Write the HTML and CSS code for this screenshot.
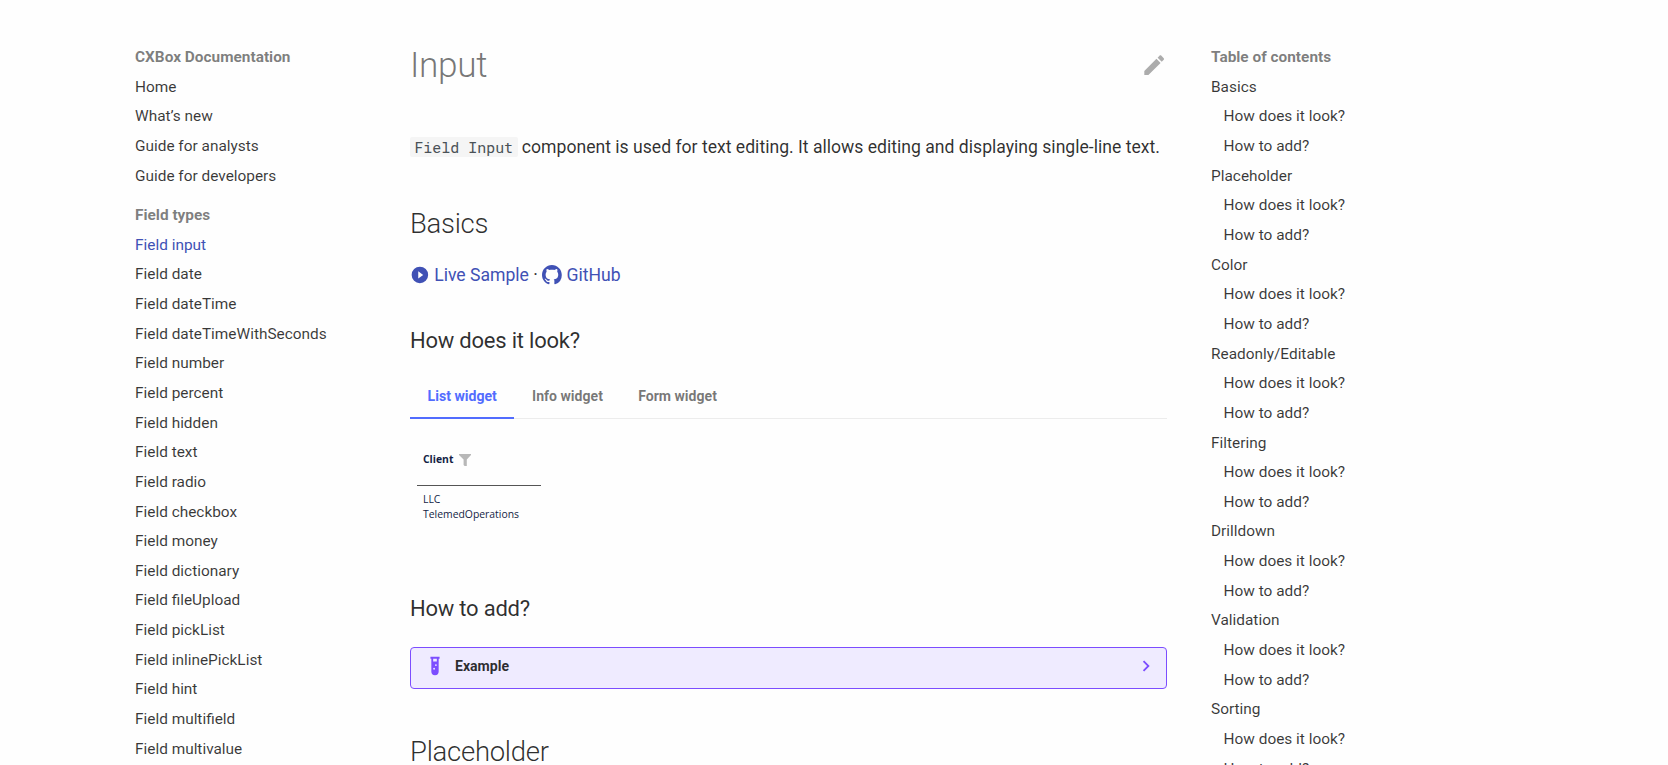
FILE: index.html
```
<!DOCTYPE html>
<html lang="en">
<head>
<meta charset="utf-8">
<title>Input - CXBox Documentation</title>
<link rel="stylesheet" href="styles.css">
</head>
<body>
<div class="layout">
  <nav class="nav">
    <h2 class="nav-title">CXBox Documentation</h2>
    <ul class="nav-list">
      <li>Home</li>
      <li>What’s new</li>
      <li>Guide for analysts</li>
      <li>Guide for developers</li>
    </ul>
    <h2 class="nav-title nav-section">Field types</h2>
    <ul class="nav-list">
      <li class="active">Field input</li>
      <li>Field date</li>
      <li>Field dateTime</li>
      <li>Field dateTimeWithSeconds</li>
      <li>Field number</li>
      <li>Field percent</li>
      <li>Field hidden</li>
      <li>Field text</li>
      <li>Field radio</li>
      <li>Field checkbox</li>
      <li>Field money</li>
      <li>Field dictionary</li>
      <li>Field fileUpload</li>
      <li>Field pickList</li>
      <li>Field inlinePickList</li>
      <li>Field hint</li>
      <li>Field multifield</li>
      <li>Field multivalue</li>
    </ul>
  </nav>

  <main class="content">
    <header class="page-head">
      <h1>Input</h1>
      <svg class="edit" viewBox="0 0 24 24"><path d="M20.71 7.04c.39-.39.39-1.04 0-1.41l-2.34-2.34c-.37-.39-1.02-.39-1.41 0l-1.84 1.83 3.75 3.75M3 17.25V21h3.75L17.81 9.93l-3.75-3.75z"/></svg>
    </header>
    <p class="intro"><code>Field Input</code> component is used for text editing. It allows editing and displaying single-line text.</p>

    <h2>Basics</h2>
    <p class="links"><a><svg class="ico" viewBox="0 0 24 24"><path fill-rule="evenodd" d="M10 16.500l6-4.500-6-4.500zM12 2A10 10 0 0 0 2 12a10 10 0 0 0 10 10 10 10 0 0 0 10-10A10 10 0 0 0 12 2z"/></svg> Live Sample</a> · <a><svg class="ico" viewBox="0 0 16 16"><path d="M8 0C3.580 0 0 3.580 0 8c0 3.540 2.290 6.530 5.470 7.590.4.070.55-.17.55-.38 0-.19-.01-.82-.01-1.490-2.010.37-2.530-.49-2.690-.94-.09-.23-.48-.94-.82-1.130-.28-.15-.68-.52-.01-.53.630-.01 1.080.58 1.230.82.720 1.210 1.870.87 2.330.66.070-.52.280-.87.510-1.070-1.780-.2-3.640-.89-3.640-3.950 0-.87.310-1.590.820-2.150-.08-.2-.36-1.020.080-2.120 0 0 .670-.21 2.200.82.640-.18 1.320-.27 2-.27s1.360.090 2 .27c1.530-1.040 2.200-.82 2.200-.82.440 1.100.160 1.920.080 2.120.510.560.820 1.270.820 2.150 0 3.070-1.870 3.750-3.650 3.950.290.250.540.730.540 1.480 0 1.070-.01 1.930-.01 2.200 0 .210.150.460.550.38A8 8 0 0 0 16 8c0-4.420-3.580-8-8-8z"/></svg> GitHub</a></p>

    <h3>How does it look?</h3>
    <div class="tabs">
      <span class="tab selected">List widget</span>
      <span class="tab">Info widget</span>
      <span class="tab">Form widget</span>
    </div>
    <div class="widget">
      <div class="widget-head">Client
        <svg class="filter" viewBox="0 0 12 12"><path d="M0 0h12v1L7.800 5.500V12H5.600L4.600 11V5.500L0 1z"/></svg>
      </div>
      <div class="widget-cell">LLC<br>TelemedOperations</div>
    </div>

    <h3>How to add?</h3>
    <div class="example">
      <svg class="tube" viewBox="0 0 24 24"><path d="M7 2v2h1v14a4 4 0 0 0 4 4 4 4 0 0 0 4-4V4h1V2H7m4 14c-.6 0-1-.4-1-1s.4-1 1-1 1 .4 1 1-.4 1-1 1m2-4c-.6 0-1-.4-1-1s.4-1 1-1 1 .4 1 1-.4 1-1 1m1-5h-4V4h4v3z"/></svg>
      <span class="example-title">Example</span>
      <svg class="chevron" viewBox="0 0 24 24"><path d="M8.590 16.580 13.170 12 8.590 7.410 10 6l6 6-6 6z"/></svg>
    </div>

    <h2>Placeholder</h2>
  </main>

  <aside class="nav toc">
    <h2 class="nav-title">Table of contents</h2>
    <ul class="nav-list">
      <li>Basics<ul><li>How does it look?</li><li>How to add?</li></ul></li>
      <li>Placeholder<ul><li>How does it look?</li><li>How to add?</li></ul></li>
      <li>Color<ul><li>How does it look?</li><li>How to add?</li></ul></li>
      <li>Readonly/Editable<ul><li>How does it look?</li><li>How to add?</li></ul></li>
      <li>Filtering<ul><li>How does it look?</li><li>How to add?</li></ul></li>
      <li>Drilldown<ul><li>How does it look?</li><li>How to add?</li></ul></li>
      <li>Validation<ul><li>How does it look?</li><li>How to add?</li></ul></li>
      <li>Sorting<ul><li>How does it look?</li><li>How to add?</li></ul></li>
    </ul>
  </aside>
</div>
</body>
</html>
```

FILE: styles.css
```
* { box-sizing: border-box; }
html { background: #fefefe; }
body {
  margin: 0;
  height: 765px;
  overflow: hidden;
  font-family: Roboto, "Liberation Sans", sans-serif;
  font-size: 17.6px;
  line-height: 1.6;
  color: rgba(0, 0, 0, .82);
}
h1, h2, h3, p, ul { margin: 0; padding: 0; }
ul { list-style: none; }
.layout {
  display: grid;
  grid-template-columns: 275px 757px 1fr;
  padding-left: 135px;
}

.nav { padding-top: 47.2px; font-size: 15.4px; line-height: 20.02px; }
.nav-title { font-size: 15.4px; line-height: 20.02px; font-weight: 700; color: rgba(0, 0, 0, .52); margin: 0; }
.nav-section { margin-top: 19.4px; }
.nav-list { color: rgba(0, 0, 0, .78); }
.nav-list li { margin-top: 9.625px; }
.nav-list ul { padding-left: 12.6px; }
.nav-list .active { color: #4051b5; }
.toc { padding-left: 44px; }

.content { padding-top: 43px; }
.page-head { display: flex; justify-content: space-between; margin-bottom: 44px; }
h1 { font-size: 35.2px; line-height: 1.3; font-weight: 300; color: rgba(0, 0, 0, .54); letter-spacing: -.01em; }
.edit { width: 26.4px; height: 26.4px; margin-top: 9px; fill: rgba(0, 0, 0, .32); }
.intro { white-space: nowrap; }
code {
  font-family: "Roboto Mono", "Liberation Mono", monospace;
  font-size: 14.96px;
  padding: 0 4.4px;
  border-radius: 2px;
  background: #f5f5f5;
  color: #4a5257;
}
.content h2 { margin: 44px 0 17.6px; font-size: 27.5px; line-height: 1.4; font-weight: 300; letter-spacing: -.01em; }
.content h3 { margin: 35.2px 0 17.6px; font-size: 22px; line-height: 1.5; font-weight: 400; letter-spacing: -.01em; }
.links a { color: #4051b5; }
.ico { width: 19.8px; height: 19.8px; fill: currentColor; vertical-align: text-top; }

.tabs { display: flex; box-shadow: inset 0 -1px rgba(0, 0, 0, .07); font-size: 14.08px; font-weight: 700; }
.tab { padding: 10px 17.6px 9.8px; border-bottom: 2px solid transparent; color: rgba(0, 0, 0, .54); }
.selected { color: #526cfe; border-color: #526cfe; }

.widget {
  width: 124px;
  height: 138px;
  margin: 0 0 0 7px;
  padding-top: 31.4px;
  font: 10.4px/15px "Open Sans", "Noto Sans", sans-serif;
  color: #141f45;
}
.widget-head { display: flex; gap: 6px; height: 35px; padding: 1px 6px 0; border-bottom: 1px solid #555; font-weight: 700; }
.filter { width: 12px; height: 12px; margin-top: 2px; fill: #b8b8b8; }
.widget-cell { padding: 6px; }

.example {
  display: flex;
  align-items: center;
  height: 42px;
  margin-top: 22px;
  padding: 0 8.8px 4px 13.2px;
  border: 1px solid #7c4dff;
  border-radius: 4px;
  background: #efebff;
  font-size: 14.08px;
  font-weight: 700;
}
.tube, .chevron { width: 22px; height: 22px; fill: #7c4dff; }
.tube { margin-right: 8.800px; }
.chevron { margin-left: auto; }
```
